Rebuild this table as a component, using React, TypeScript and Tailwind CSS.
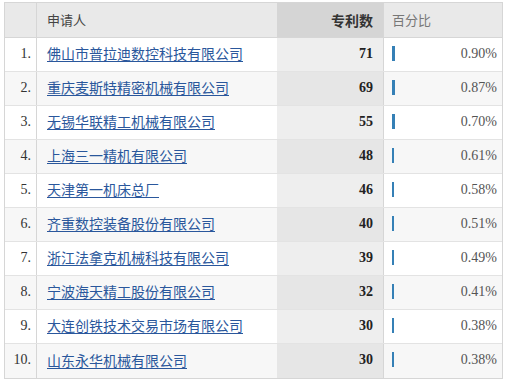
import React from "react";

const rows = [
  { name: "佛山市普拉迪数控科技有限公司", count: 71, pct: "0.90%", bar: 3 },
  { name: "重庆麦斯特精密机械有限公司", count: 69, pct: "0.87%", bar: 3 },
  { name: "无锡华联精工机械有限公司", count: 55, pct: "0.70%", bar: 3 },
  { name: "上海三一精机有限公司", count: 48, pct: "0.61%", bar: 2 },
  { name: "天津第一机床总厂", count: 46, pct: "0.58%", bar: 2 },
  { name: "齐重数控装备股份有限公司", count: 40, pct: "0.51%", bar: 2 },
  { name: "浙江法拿克机械科技有限公司", count: 39, pct: "0.49%", bar: 2 },
  { name: "宁波海天精工股份有限公司", count: 32, pct: "0.41%", bar: 2 },
  { name: "大连创铁技术交易市场有限公司", count: 30, pct: "0.38%", bar: 2 },
  { name: "山东永华机械有限公司", count: 30, pct: "0.38%", bar: 2 },
];

const cjk = { fontFamily: '"SimSun","Noto Sans CJK SC",sans-serif' };

export default function App() {
  return (
    <div className="w-[508px] h-[384px] bg-white pt-[2px] pl-[4px]">
      <div className="w-[499px] border border-[#d6d6d6]">
        <div className="grid grid-cols-[32px_240px_106px_119px] h-[35px] bg-[#e9e9e9] border-b border-[#d6d6d6]">
          <div className="border-r border-[#d6d6d6]" />
          <div className="flex items-center pl-[10px] text-[13px] text-[#444]" style={cjk}>申请人</div>
          <div className="flex items-center justify-end pr-[10px] bg-[#d5d5d5] text-[14px] font-bold text-[#333]" style={cjk}>专利数</div>
          <div className="flex items-center pl-[8px] text-[13px] text-[#777] border-l border-[#d6d6d6]" style={cjk}>百分比</div>
        </div>
        {rows.map((r, i) => {
          const even = i % 2 === 1;
          return (
            <div
              key={i}
              className={`grid grid-cols-[32px_240px_106px_119px] h-[34px] ${i < rows.length - 1 ? "border-b border-[#e3e3e3]" : ""} ${even ? "bg-[#f7f7f7]" : "bg-white"}`}
            >
              <div className="flex items-center justify-end pr-[5px] pb-[3px] border-r border-[#d6d6d6] text-[14px] text-[#333] font-['Liberation_Serif',serif]">
                {i + 1}.
              </div>
              <div className="flex items-center pl-[10px] pb-[3px]">
                <a href="#" className="text-[14px] text-[#2a579c] underline underline-offset-2 leading-none" style={cjk}>
                  {r.name}
                </a>
              </div>
              <div className={`flex items-center justify-end pr-[10px] pb-[3px] text-[14px] font-bold text-[#222] font-['Liberation_Serif',serif] ${even ? "bg-[#e6e6e6]" : "bg-[#eeeeee]"}`}>
                {r.count}
              </div>
              <div className="flex items-center pl-[8px] pr-[5px] pb-[3px] border-l border-[#d6d6d6]">
                <div className="h-[15px] bg-[#3580b6]" style={{ width: r.bar }} />
                <div className="ml-auto text-[14px] text-[#555] font-['Liberation_Serif',serif]">{r.pct}</div>
              </div>
            </div>
          );
        })}
      </div>
    </div>
  );
}
